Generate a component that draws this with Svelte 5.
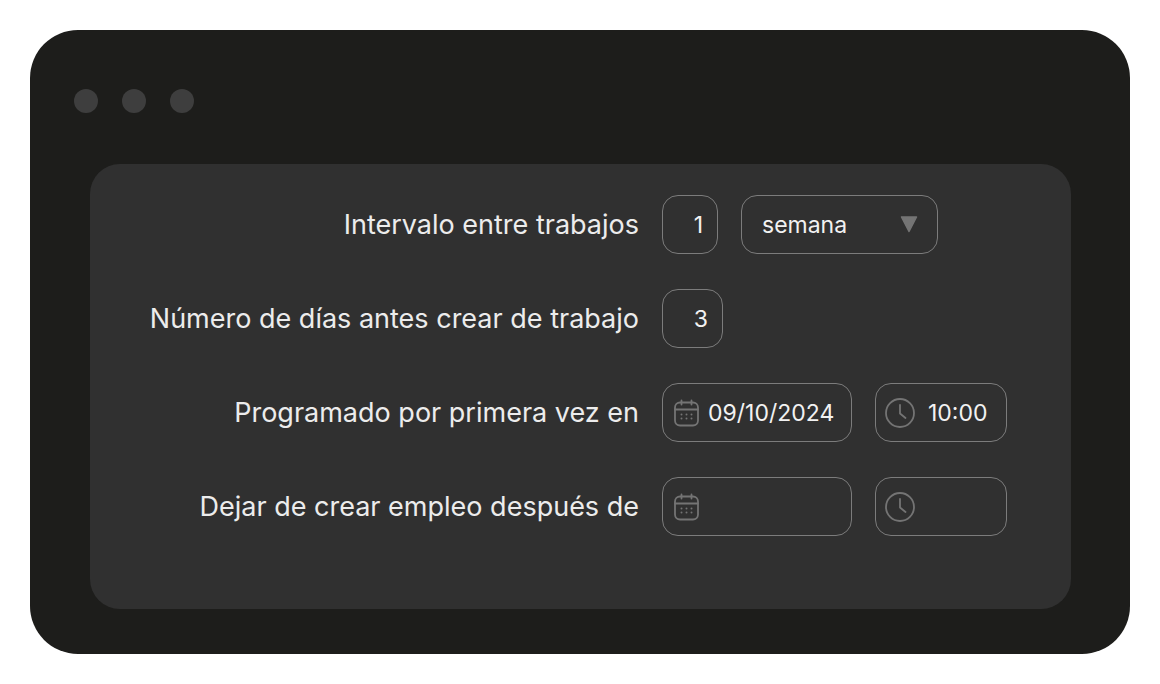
<script>
  let interval = "1";
  let unit = "semana";
  let daysBefore = "3";

  let schedules = [
    {
      id: "start",
      label: "Programado por primera vez en",
      date: "09/10/2024",
      time: "10:00",
    },
    {
      id: "end",
      label: "Dejar de crear empleo después de",
      date: "",
      time: "",
    },
  ];
</script>

<main class="window">
  <div class="dots">
    <span></span>
    <span></span>
    <span></span>
  </div>

  <form class="panel">
    <label for="interval">Intervalo entre trabajos</label>
    <div class="controls">
      <input
        id="interval"
        class="field number"
        type="text"
        inputmode="numeric"
        bind:value={interval}
      />
      <div class="field select">
        <select aria-label="Unidad del intervalo" bind:value={unit}>
          <option value="semana">semana</option>
        </select>
        <svg class="arrow" viewBox="0 0 18 17" aria-hidden="true">
          <path d="M1.5 1h15L9 15.5z" />
        </svg>
      </div>
    </div>

    <label for="daysBefore">Número de días antes crear de trabajo</label>
    <div class="controls">
      <input
        id="daysBefore"
        class="field number wide"
        type="text"
        inputmode="numeric"
        bind:value={daysBefore}
      />
    </div>

    {#each schedules as schedule (schedule.id)}
      <label for={schedule.id}>{schedule.label}</label>
      <div class="controls">
        <div class="field date">
          <svg class="calendar" viewBox="0 0 26 28" aria-hidden="true">
            <rect x="1" y="3.5" width="23" height="23" rx="5" />
            <path d="M1 10.5h23M7.5 1.5v4M17.5 1.5v4" />
            <g class="days">
              <circle cx="7.5" cy="15.5" r="1" />
              <circle cx="12.5" cy="15.5" r="1" />
              <circle cx="17.5" cy="15.5" r="1" />
              <circle cx="7.5" cy="19.5" r="1" />
              <circle cx="12.5" cy="19.5" r="1" />
              <circle cx="17.5" cy="19.5" r="1" />
            </g>
          </svg>
          <input id={schedule.id} type="text" bind:value={schedule.date} />
        </div>
        <div class="field time">
          <svg class="clock" viewBox="0 0 30 30" aria-hidden="true">
            <circle cx="15" cy="15" r="14" />
            <path d="M15 7v8.5l5.5 4.5" />
          </svg>
          <input
            type="text"
            aria-label="Hora: {schedule.label}"
            bind:value={schedule.time}
          />
        </div>
      </div>
    {/each}
  </form>
</main>

<style>
  :global(body) {
    background: #ffffff;
  }

  .window {
    box-sizing: border-box;
    margin: 30px;
    padding: 59px 59px 45px 60px;
    border-radius: 48px;
    background: #1d1d1b;
    color: #ececec;
    font-family: Inter, "Liberation Sans", sans-serif;
  }

  .dots {
    display: flex;
    gap: 24px;
    margin-left: -16px;
  }

  .dots span {
    width: 24px;
    height: 24px;
    border-radius: 50%;
    background: #3e3e3e;
  }

  .panel {
    display: grid;
    grid-template-columns: 1fr 409px;
    align-items: center;
    gap: 35px 23px;
    margin-top: 51px;
    padding: 31px 0 73px;
    border-radius: 30px;
    background: #303030;
  }

  label {
    font-size: 27px;
    line-height: 34px;
    text-align: right;
    white-space: nowrap;
  }

  .controls {
    display: flex;
    gap: 23px;
  }

  .field {
    display: flex;
    align-items: center;
    box-sizing: border-box;
    height: 59px;
    border: 1px solid #7c7c7c;
    border-radius: 16px;
  }

  input,
  select {
    flex: 1;
    min-width: 0;
    margin: 0;
    padding: 0;
    border: 0;
    outline: 0;
    background: transparent;
    color: #f2f2f2;
    font-family: inherit;
    font-size: 23px;
    line-height: 30px;
  }

  input.field {
    flex: none;
    border: 1px solid #7c7c7c;
  }

  .field:focus-within {
    border-color: #a0a0a0;
  }

  input.number {
    width: 56px;
    padding-right: 14px;
    text-align: right;
  }

  input.wide {
    width: 61px;
  }

  .select {
    position: relative;
    width: 197px;
  }

  select {
    height: 100%;
    padding: 0 48px 0 20px;
    appearance: none;
    cursor: pointer;
  }

  option {
    background: #303030;
  }

  .arrow {
    position: absolute;
    right: 19px;
    width: 18px;
    height: 17px;
    fill: #747474;
    stroke: #747474;
    stroke-width: 1.5;
    stroke-linejoin: round;
    pointer-events: none;
  }

  .date {
    gap: 8px;
    width: 190px;
    padding: 0 8px 0 11px;
  }

  .time {
    gap: 13px;
    width: 132px;
    padding: 0 8px 0 9px;
  }

  .calendar,
  .clock {
    flex: none;
    fill: none;
    stroke: #747474;
    stroke-width: 1.8;
    stroke-linecap: round;
    stroke-linejoin: round;
  }

  .calendar {
    width: 26px;
    height: 28px;
  }

  .clock {
    width: 30px;
    height: 30px;
  }

  .days {
    fill: #747474;
    stroke: none;
  }
</style>
